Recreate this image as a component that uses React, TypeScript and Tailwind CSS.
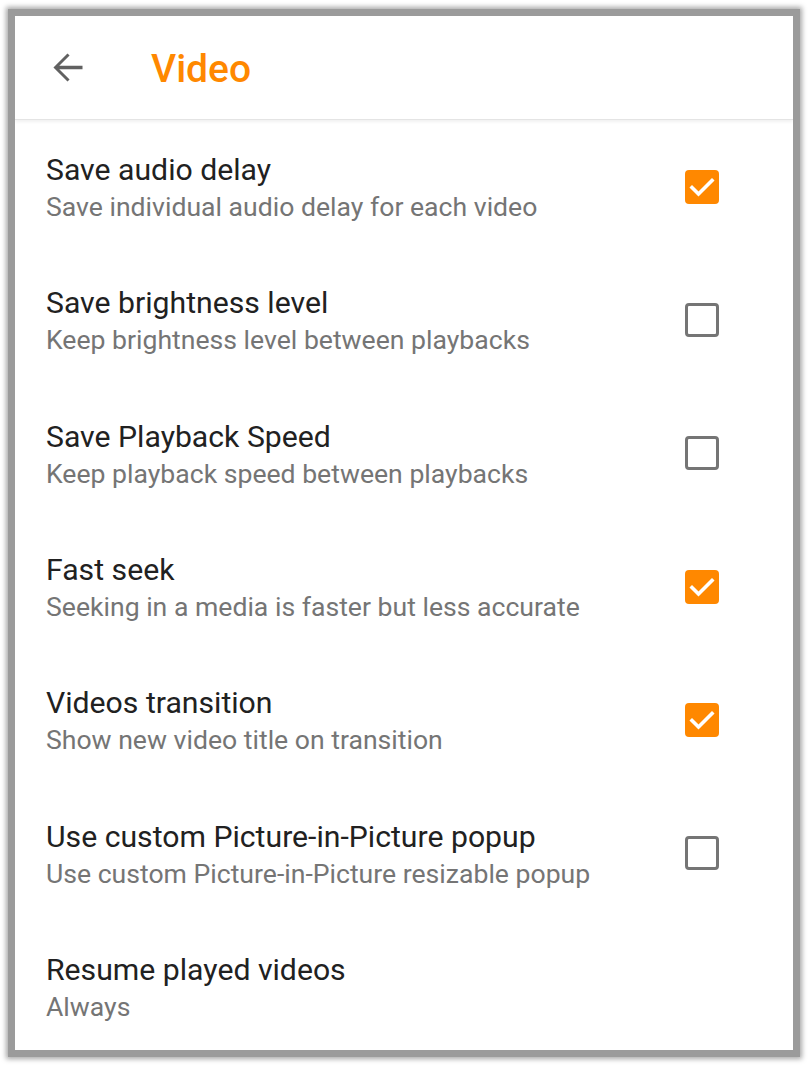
import React, { useState } from 'react';

interface Pref {
  id: string;
  title: string;
  summary: string;
  checked?: boolean;
}

const prefs: Pref[] = [
  { id: 'audio', title: 'Save audio delay', summary: 'Save individual audio delay for each video', checked: true },
  { id: 'brightness', title: 'Save brightness level', summary: 'Keep brightness level between playbacks', checked: false },
  { id: 'speed', title: 'Save Playback Speed', summary: 'Keep playback speed between playbacks', checked: false },
  { id: 'seek', title: 'Fast seek', summary: 'Seeking in a media is faster but less accurate', checked: true },
  { id: 'transition', title: 'Videos transition', summary: 'Show new video title on transition', checked: true },
  { id: 'pip', title: 'Use custom Picture-in-Picture popup', summary: 'Use custom Picture-in-Picture resizable popup', checked: false },
  { id: 'resume', title: 'Resume played videos', summary: 'Always' },
];

function CheckBox({ checked }: { checked: boolean }) {
  if (checked) {
    return (
      <div className="w-[34px] h-[34px] rounded-[4px] bg-[#ff8800]">
        <svg width="34" height="34" viewBox="0 0 34 34" fill="none">
          <path d="M7 17.5l6.5 6.5L27 10.5" stroke="white" strokeWidth="3.6" strokeLinecap="square" />
        </svg>
      </div>
    );
  }
  return <div className="w-[34px] h-[34px] rounded-[4px] border-[3px] border-[#757575]" />;
}

export default function App() {
  const [values, setValues] = useState<Record<string, boolean>>(
    Object.fromEntries(prefs.map(p => [p.id, !!p.checked]))
  );

  const toggle = (id: string) => setValues(prev => ({ ...prev, [id]: !prev[id] }));

  return (
    <div className="min-h-screen bg-white pt-[9px] pl-[8px]" style={{ fontFamily: 'Roboto, "Noto Sans", sans-serif' }}>
      <div className="w-[792px] h-[1048px] border-[7px] border-[#9b9b9b] shadow-[0_0_5px_2px_rgba(0,0,0,0.35)] bg-white overflow-hidden flex flex-col">
        {/* toolbar */}
        <div className="h-[104px] shrink-0 flex items-center border-b border-[#e4e4e4] shadow-[0_2px_3px_rgba(0,0,0,0.06)] relative z-10 bg-white">
          <button className="ml-[30px] w-[45px] h-[45px] flex items-center justify-center text-[#616161]">
            <svg width="45" height="45" viewBox="0 0 24 24" fill="currentColor">
              <path d="M20 11.1H7.6l5.5-5.5L12 4.5 4.5 12l7.5 7.5 1.1-1.1-5.5-5.5H20v-1.8z" />
            </svg>
          </button>
          <h1 className="ml-[61px] text-[39px] font-medium text-[#ff8800] leading-none mt-[3px]">Video</h1>
        </div>

        {/* preference list */}
        <div className="flex-1 flex flex-col">
          {prefs.map(pref => (
            <div
              key={pref.id}
              onClick={() => pref.checked !== undefined && toggle(pref.id)}
              className="h-[133.33px] shrink-0 flex items-start pl-[31px] pr-[74px] cursor-pointer"
            >
              <div className="flex-1 pt-[32px]">
                <div className="text-[30.2px] leading-[36px] text-[#212121]">{pref.title}</div>
                <div className="text-[26.6px] leading-[38px] text-[#757575]">{pref.summary}</div>
              </div>
              {pref.checked !== undefined && (
                <div className="self-center">
                  <CheckBox checked={values[pref.id]} />
                </div>
              )}
            </div>
          ))}
        </div>
      </div>
    </div>
  );
}
